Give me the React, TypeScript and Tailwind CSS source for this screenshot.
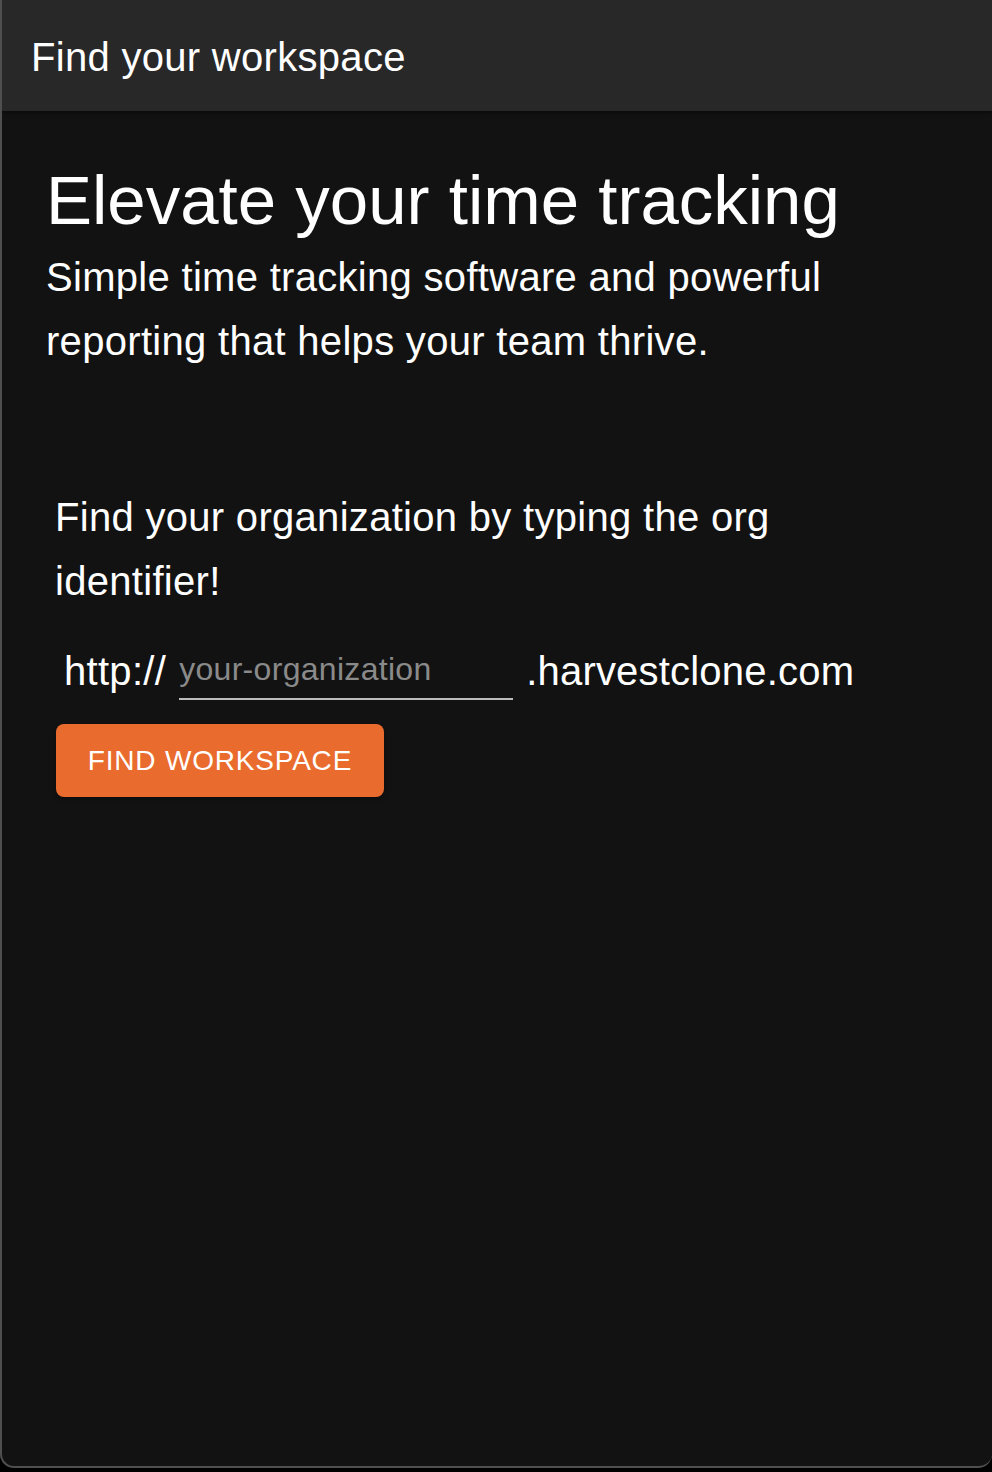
import React from 'react';

const font = { fontFamily: '"Liberation Sans", Arial, Helvetica, sans-serif' };

export default function App() {
    return (
        <div className="w-[992px] h-[1472px] bg-black" style={font}>
            <div className="h-[1468px] bg-[#121212] border-l-2 border-b-2 border-[#4f4f4f] rounded-bl-[14px] rounded-br-[14px] overflow-hidden flex flex-col">
                {/* App bar */}
                <header className="h-[111px] shrink-0 bg-[#282828] flex items-center pl-[29px] pt-[2px] shadow-[0_2px_4px_rgba(0,0,0,0.4)]">
                    <h1 className="text-[40px] tracking-[0.3px] text-white font-normal">Find your workspace</h1>
                </header>

                {/* Hero */}
                <section className="pl-[44px] pr-[40px] pt-[50px]">
                    <h2 className="text-[69px] leading-[80px] text-white font-normal">Elevate your time tracking</h2>
                    <p className="mt-[4px] text-[40px] tracking-[0.3px] leading-[64px] text-white max-w-[880px]">
                        Simple time tracking software and powerful reporting that helps your team thrive.
                    </p>
                </section>

                {/* Workspace lookup */}
                <section className="pl-[53px] pr-[40px] mt-[112px]">
                    <p className="text-[40px] tracking-[0.3px] leading-[64px] text-white max-w-[860px]">
                        Find your organization by typing the org identifier!
                    </p>
                    <div className="mt-[34px] flex items-start pl-[9px]">
                        <span className="text-[40px] tracking-[0.3px] leading-[48px] text-white">http://</span>
                        <input
                            type="text"
                            placeholder="your-organization"
                            className="ml-[13px] mt-[1px] w-[334px] h-[52px] pb-[8px] bg-transparent text-[32px] tracking-[0.3px] text-white placeholder:text-[#8a8a8a] border-b-2 border-[#bdbdbd] outline-none"
                            style={font}
                        />
                        <span className="ml-[13px] text-[40px] tracking-[0.2px] leading-[48px] text-white">.harvestclone.com</span>
                    </div>
                    <button className="mt-[24px] ml-[1px] w-[328px] h-[73px] rounded-[8px] bg-[#e96b2e] text-white text-[28px] tracking-[0.8px] uppercase shadow-[0_2px_4px_rgba(0,0,0,0.35)]">
                        Find Workspace
                    </button>
                </section>
            </div>
        </div>
    );
}
